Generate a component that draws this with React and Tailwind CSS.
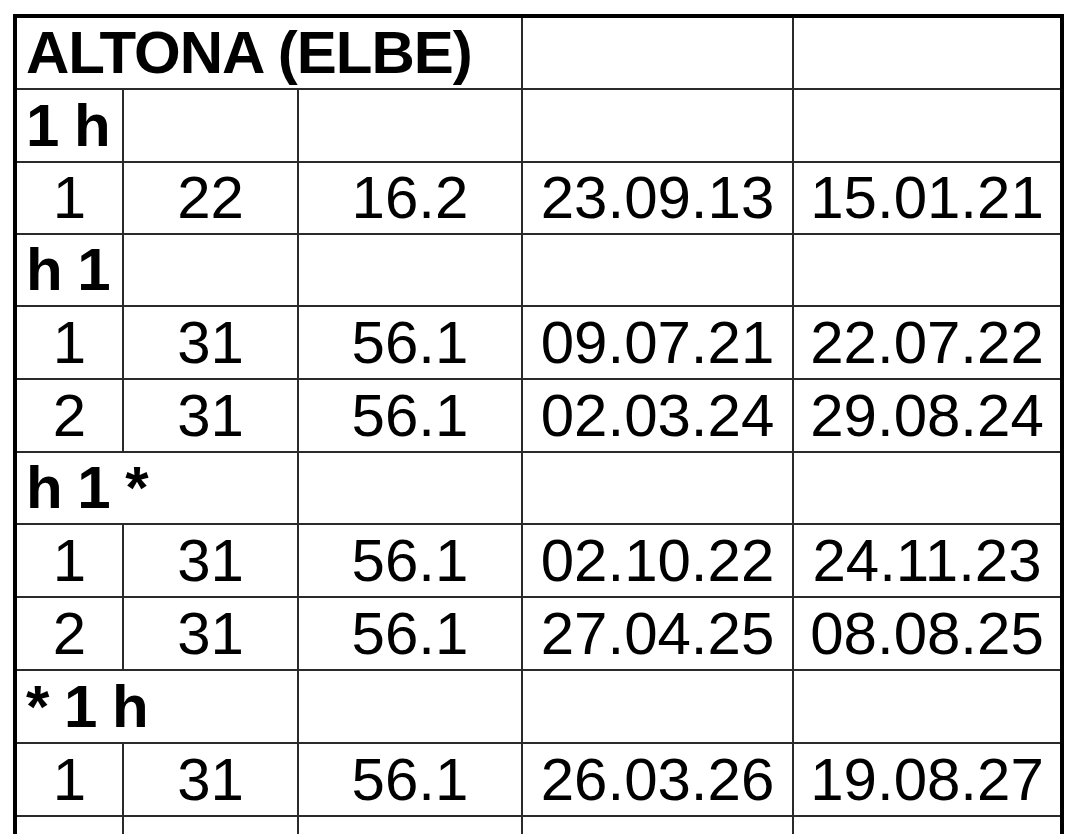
import React from "react";

const rows = [
  { h: "h-[72px]", cells: [{ t: "ALTONA (ELBE)", span: 3, bold: true }, {}, {}] },
  { h: "h-[73px]", cells: [{ t: "1 h", bold: true }, {}, {}, {}, {}] },
  { h: "h-[72px]", cells: [{ t: "1" }, { t: "22" }, { t: "16.2" }, { t: "23.09.13" }, { t: "15.01.21" }] },
  { h: "h-[72px]", cells: [{ t: "h 1", bold: true }, {}, {}, {}, {}] },
  { h: "h-[73px]", cells: [{ t: "1" }, { t: "31" }, { t: "56.1" }, { t: "09.07.21" }, { t: "22.07.22" }] },
  { h: "h-[73px]", cells: [{ t: "2" }, { t: "31" }, { t: "56.1" }, { t: "02.03.24" }, { t: "29.08.24" }] },
  { h: "h-[72px]", cells: [{ t: "h 1 *", span: 2, bold: true }, {}, {}, {}] },
  { h: "h-[73px]", cells: [{ t: "1" }, { t: "31" }, { t: "56.1" }, { t: "02.10.22" }, { t: "24.11.23" }] },
  { h: "h-[73px]", cells: [{ t: "2" }, { t: "31" }, { t: "56.1" }, { t: "27.04.25" }, { t: "08.08.25" }] },
  { h: "h-[73px]", cells: [{ t: "* 1 h", span: 2, bold: true }, {}, {}, {}] },
  { h: "h-[73px]", cells: [{ t: "1" }, { t: "31" }, { t: "56.1" }, { t: "26.03.26" }, { t: "19.08.27" }] },
  { h: "h-[60px]", cells: [{}, {}, {}, {}, {}] },
];

const spanClass = { 1: "", 2: "col-span-2", 3: "col-span-3" };

const Cell = ({ cell, last }) => {
  const span = cell.span || 1;
  return (
    <div
      className={`${spanClass[span]} flex items-center border-b-2 border-[#2a2a2a] ${last ? "" : "border-r-2"} ${
        cell.bold ? "justify-start pl-[9px] font-bold tracking-[-1px]" : "justify-center"
      }`}
    >
      {cell.t && <span className="text-[60px] leading-none whitespace-pre">{cell.t}</span>}
    </div>
  );
};

export default function App() {
  return (
    <div
      className="h-[834px] w-full overflow-hidden bg-white pl-[13px] pt-[14px] text-black"
      style={{ fontFamily: '"Liberation Sans", Arial, sans-serif' }}
    >
      <div className="w-[1051px] border-4 border-black">
        {rows.map((row, i) => (
          <div key={i} className={`grid grid-cols-[107px_175px_224px_271px_266px] ${row.h}`}>
            {row.cells.map((cell, j) => (
              <Cell key={j} cell={cell} last={j === row.cells.length - 1} />
            ))}
          </div>
        ))}
      </div>
    </div>
  );
}
